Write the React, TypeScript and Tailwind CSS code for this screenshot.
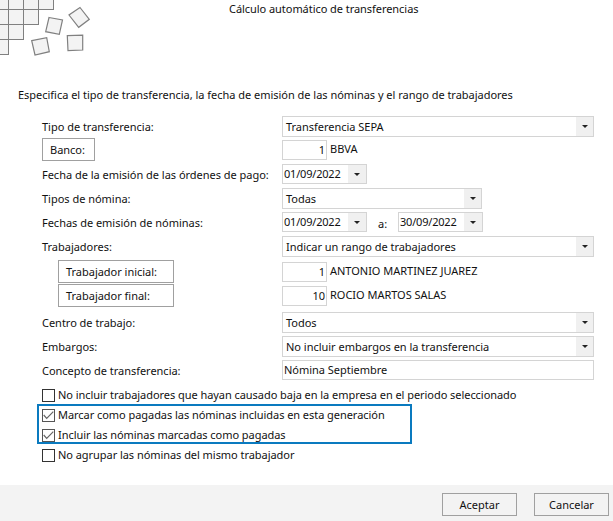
const font = "font-['Noto_Sans',sans-serif] text-[11px] text-[#111] leading-none tracking-[-0.02px]";

function Caret() {
  return (
    <svg width="6" height="3" viewBox="0 0 6 3" className="block">
      <path d="M0 0H6L3 3Z" fill="#222" />
    </svg>
  );
}

function Select({ value, w }: { value: string; w: string }) {
  return (
    <div className={`flex h-[21px] ${w} items-center border border-[#d4d4d4] bg-white`}>
      <span className="flex-1 pb-px pl-[3px]">{value}</span>
      <span className="flex h-full w-[17px] items-center justify-center bg-[#f0f0f0]"><Caret /></span>
    </div>
  );
}

function DateBox({ value }: { value: string }) {
  return (
    <div className="flex h-[20px] w-[85px] items-center border border-[#d4d4d4] bg-white">
      <span className="flex-1 pb-px pl-px tracking-[-0.2px]">{value}</span>
      <span className="flex h-full w-[18px] items-center justify-center bg-[#f0f0f0]"><Caret /></span>
    </div>
  );
}

function NumBox({ value, name }: { value: string; name?: string }) {
  return (
    <div className="flex items-center">
      <div className="flex h-[20px] w-[45px] items-center justify-end border border-[#d4d4d4] bg-white pb-px pr-[1px]">{value}</div>
      <span className="pb-[2px] pl-[3px]">{name}</span>
    </div>
  );
}

function Check({ label, checked }: { label: string; checked?: boolean }) {
  return (
    <div className="flex h-[20px] items-center">
      <span className={`flex h-[13px] w-[13px] items-center justify-center border ${checked ? "border-[#555]" : "border-[#333]"} bg-white`}>
        {checked && (
          <svg width="11" height="11" viewBox="0 0 11 11">
            <path d="M0.7 5L3.7 8.3L10.3 1.7" fill="none" stroke="#666" strokeWidth="1.2" />
          </svg>
        )}
      </span>
      <span className="pb-[2px] pl-[3px] tracking-[-0.05px]">{label}</span>
    </div>
  );
}

function Row({ label, children, mt }: { label: React.ReactNode; children: React.ReactNode; mt: string }) {
  return (
    <div className={`flex items-center ${mt}`}>
      <div className="w-[240px] shrink-0">{label}</div>
      <div className="flex-1">{children}</div>
    </div>
  );
}

function Btn({ label, w }: { label: string; w: string }) {
  return (
    <div className={`flex h-[23px] ${w} items-center border border-[#a0a0a0] pl-[7px]`}>
      <span>{label}</span>
    </div>
  );
}

function Logo() {
  const cells: [number, number, number, number][] = [
    [-7, -6, 15, 15], [8, -6, 15, 15], [23, -6, 15, 15], [38, -6, 15, 15],
    [-7, 9, 15, 15], [8, 9, 15, 15], [23, 9, 15, 15],
    [-7, 24, 15, 15], [8, 24, 15, 15],
    [-7, 39, 15, 15],
  ];
  const tumbled = [
    "49,17.5 62.5,20 59.3,34.3 45.7,31.7",
    "80,7.5 89.3,19.3 78.7,27.3 69,15",
    "67.3,35.7 82.7,35.2 82.7,50 68,50.7",
    "31.7,40.7 46.7,37.7 49.3,51.7 35,55",
  ];
  return (
    <svg width="92" height="58" viewBox="0 0 92 58" className="block">
      {cells.map(([x, y, w, h], i) => (
        <rect key={i} x={x + 0.5} y={y + 0.5} width={w} height={h} fill="#f3f3f3" stroke="#808080" />
      ))}
      {tumbled.map((p, i) => (
        <polygon key={i} points={p} fill="#f3f3f3" stroke="#808080" strokeWidth="1.2" />
      ))}
    </svg>
  );
}

export default function App() {
  return (
    <div className={`flex h-[521px] w-[613px] flex-col overflow-hidden bg-white ${font}`}>
      <div className="relative h-[58px] shrink-0">
        <Logo />
        <div className="absolute left-[229px] top-[2px] leading-[14px] tracking-[-0.05px]">Cálculo automático de transferencias</div>
      </div>
      <div className="mt-[30px] h-[14px] pl-[18px] leading-[14px]">
        Especifica el tipo de transferencia, la fecha de emisión de las nóminas y el rango de trabajadores
      </div>
      <div className="flex-1 pl-[42px] pr-[19px] pt-[14px]">
        <Row label="Tipo de transferencia:" mt="mt-0"><Select value="Transferencia SEPA" w="w-full" /></Row>
        <Row label={<Btn label="Banco:" w="w-[53px]" />} mt="mt-px"><NumBox value="1" name="BBVA" /></Row>
        <Row label="Fecha de la emisión de las órdenes de pago:" mt="mt-[3px]"><DateBox value="01/09/2022" /></Row>
        <Row label="Tipos de nómina:" mt="mt-[4px]"><Select value="Todas" w="w-[200px]" /></Row>
        <Row label="Fechas de emisión de nóminas:" mt="mt-[3px]">
          <div className="flex items-center">
            <DateBox value="01/09/2022" />
            <span className="w-[31px] pl-[11px] pt-[3px]">a:</span>
            <DateBox value="30/09/2022" />
          </div>
        </Row>
        <Row label="Trabajadores:" mt="mt-[4px]"><Select value="Indicar un rango de trabajadores" w="w-full" /></Row>
        <Row label={<div className="pl-[16px]"><Btn label="Trabajador inicial:" w="w-[116px]" /></div>} mt="mt-[3px]"><NumBox value="1" name="ANTONIO MARTINEZ JUAREZ" /></Row>
        <Row label={<div className="pl-[16px]"><Btn label="Trabajador final:" w="w-[116px]" /></div>} mt="mt-px"><NumBox value="10" name="ROCIO MARTOS SALAS" /></Row>
        <Row label="Centro de trabajo:" mt="mt-[5px]"><Select value="Todos" w="w-full" /></Row>
        <Row label="Embargos:" mt="mt-[3px]"><Select value="No incluir embargos en la transferencia" w="w-full" /></Row>
        <Row label="Concepto de transferencia:" mt="mt-[3px]">
          <div className="flex h-[20px] items-center border border-[#d4d4d4] pb-px pl-px">Nómina Septiembre</div>
        </Row>
        <div className="relative mt-[5px]">
          <Check label="No incluir trabajadores que hayan causado baja en la empresa en el periodo seleccionado" />
          <Check checked label="Marcar como pagadas las nóminas incluidas en esta generación" />
          <Check checked label="Incluir las nóminas marcadas como pagadas" />
          <Check label="No agrupar las nóminas del mismo trabajador" />
          <div className="absolute left-[-5px] top-[19px] h-[40px] w-[375px] border-2 border-[#0a7abf]" />
        </div>
      </div>
      <div className="flex h-[36px] shrink-0 items-start justify-end gap-[17px] bg-[#f3f3f3] pr-[4px] pt-[8px]">
        <div className="flex h-[23px] w-[75px] items-center justify-center border border-[#a0a0a0]">Aceptar</div>
        <div className="flex h-[23px] w-[75px] items-center justify-center border border-[#a0a0a0]">Cancelar</div>
      </div>
    </div>
  );
}
